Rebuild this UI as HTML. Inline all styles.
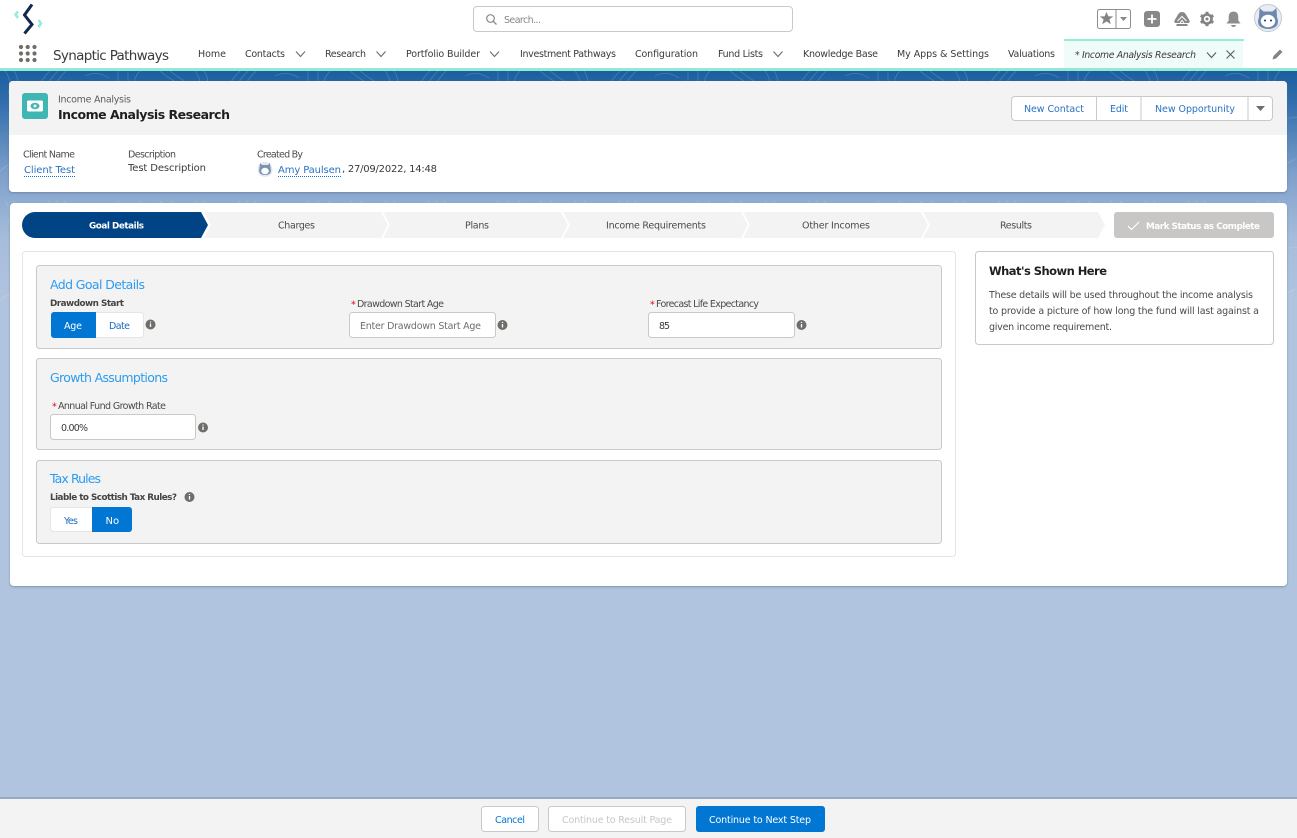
<!DOCTYPE html>
<html><head><meta charset="utf-8"><title>Income Analysis Research</title>
<style>
html,body{margin:0;padding:0;width:1297px;height:838px;overflow:hidden;background:#b0c4df}
svg{position:absolute;left:0;top:0;display:block}
text{font-family:"DejaVu Sans","Liberation Sans",sans-serif;font-size:9.5px;fill:#4a4a48}
.n{fill:#3a3a38}
.b{font-weight:bold}
.h{font-size:12.5px;fill:#2d9cf0}
</style></head><body>
<svg width="1297" height="838" viewBox="0 0 1297 838" xmlns="http://www.w3.org/2000/svg">
<defs>
<linearGradient id="bg" x1="0" y1="0" x2="0" y2="1"><stop offset="0" stop-color="#1b5e9f"/><stop offset=".13" stop-color="#2f6dab"/><stop offset=".45" stop-color="#7fa0cb"/><stop offset=".72" stop-color="#a5bcda"/><stop offset="1" stop-color="#b0c4df"/></linearGradient>
<pattern id="ct" width="190" height="130" patternUnits="userSpaceOnUse" x="0" y="71">
<path d="M5 0q8 10 3 22M14 0q6 8 2 18M50 0q-8 8-12 16M58 0q-8 8-12 16M66 0q-8 8-12 16M85 5q12-6 24 2M118 0v14M128 0v12M140 0q-8 8-6 20M160 0q12 10 22 14M170 0q10 8 18 12M20 60q30-25 60 0t60 10M0 100q25-22 50-4t55 8q25 0 50-16M120 40q20 12 45 4" fill="none" stroke="#fff" stroke-opacity=".16" stroke-width=".9"/>
</pattern>
<filter id="sh" x="-2%" y="-5%" width="104%" height="110%"><feDropShadow dx="0" dy="1" stdDeviation="1" flood-color="#5a6a80" flood-opacity=".55"/></filter>
</defs>
<rect width="1297" height="838" fill="#b0c4df"/>
<rect y="71" width="1297" height="230" fill="url(#bg)"/>
<rect y="71" width="1297" height="230" fill="url(#ct)"/>
<rect width="1297" height="68" fill="#fff"/>
<rect y="68" width="1297" height="3" fill="#94e8d2"/>

<!-- logo -->
<path d="M32 4.500 L24.500 15 L32 24.500 L24.500 33.500" fill="none" stroke="#14284b" stroke-width="3"/>
<path d="M18 11.500 L15.500 14.500 L18 18" fill="none" stroke="#94edd6" stroke-width="2.600"/>
<path d="M38.500 20 L41 23.500 L38.500 27" fill="none" stroke="#94edd6" stroke-width="2.600"/>
<!-- waffle -->
<g fill="#706e6b"><circle cx="21" cy="47" r="2.100"/><circle cx="27.700" cy="47" r="2.100"/><circle cx="34.500" cy="47" r="2.100"/><circle cx="21" cy="53.500" r="2.100"/><circle cx="27.700" cy="53.500" r="2.100"/><circle cx="34.500" cy="53.500" r="2.100"/><circle cx="21" cy="60" r="2.100"/><circle cx="27.700" cy="60" r="2.100"/><circle cx="34.500" cy="60" r="2.100"/></g>
<text x="53" y="60" textLength="116" style="font-size:13.500px" class="n">Synaptic Pathways</text>

<!-- search -->
<rect x="473.500" y="6.500" width="319" height="25" rx="3.500" fill="#fff" stroke="#c9c9c9"/>
<circle cx="490.500" cy="18.500" r="3.800" fill="none" stroke="#8a8886" stroke-width="1.200"/><path d="M493.300 21.300 L496.500 24.500" stroke="#8a8886" stroke-width="1.300"/>
<text x="504" y="23" textLength="37" style="fill:#8a8886">Search...</text>

<!-- top right icons -->
<rect x="1097.500" y="9.500" width="33" height="19" rx="2" fill="#fff" stroke="#8f8d8b"/><path d="M1116 9.500V28.500" stroke="#8f8d8b"/>
<path d="M1106.500 12l1.900 4.400h4.800l-3.800 3 1.400 4.800-4.300-2.800-4.300 2.800 1.400-4.800-3.800-3h4.800z" fill="#858381"/>
<path d="M1120 17h7l-3.500 4z" fill="#8a8886"/>
<rect x="1144" y="11" width="16" height="16" rx="3" fill="#8a8886"/><path d="M1152 14.500v9M1147.500 19h9" stroke="#fff" stroke-width="1.800"/>
<path d="M1182 12q3 0 4.700 3.700l2.800 4.800q.8 2-1 2.500h-13q-1.800-.5-1-2.500l2.800-4.800q1.700-3.700 4.700-3.700z" fill="#8a8886"/><path d="M1177.500 21l4.500-4.500 4.500 4.500M1180 23l2-2.700 2 2.700" fill="none" stroke="#fff" stroke-width="1"/><rect x="1176.500" y="24" width="11" height="2" fill="#8a8886"/>
<g fill="#858381"><circle cx="1207" cy="19" r="5.800"/><rect x="1205.500" y="11.800" width="3" height="14.400"/><rect x="1205.500" y="11.800" width="3" height="14.400" transform="rotate(60 1207 19)"/><rect x="1205.500" y="11.800" width="3" height="14.400" transform="rotate(120 1207 19)"/></g><circle cx="1207" cy="19" r="3.200" fill="#fff"/><circle cx="1207" cy="19" r="1.500" fill="#858381"/>
<path d="M1233.500 11.500q4.500 0 4.800 5v4l2.200 3h-14l2.200-3v-4q.3-5 4.800-5z" fill="#8f8d8b"/><path d="M1231 25h5q-.5 2-2.500 2t-2.500-2z" fill="#8f8d8b"/>
<circle cx="1268" cy="18" r="13.500" fill="#e9edf3" stroke="#c3c9d2"/><path d="M1259.500 8l4 3.500h9l4-3.500 .5 9q2 5 0 8.500-3 3.500-9 3.500t-9-3.500q-2-3.500 0-8.500z" fill="#6f89ae"/><ellipse cx="1268" cy="21" rx="7.200" ry="6.200" fill="#fff"/><circle cx="1265" cy="20.500" r="1" fill="#16325c"/><circle cx="1271" cy="20.500" r="1" fill="#16325c"/>

<!-- nav -->
<text class="n" x="198" y="57" textLength="28">Home</text>
<text class="n" x="245" y="57" textLength="40">Contacts</text>
<text class="n" x="325" y="57" textLength="41">Research</text>
<text class="n" x="406" y="57" textLength="74">Portfolio Builder</text>
<text class="n" x="520" y="57" textLength="96">Investment Pathways</text>
<text class="n" x="635" y="57" textLength="63">Configuration</text>
<text class="n" x="718" y="57" textLength="45">Fund Lists</text>
<text class="n" x="803" y="57" textLength="75">Knowledge Base</text>
<text class="n" x="897" y="57" textLength="92">My Apps &amp; Settings</text>
<text class="n" x="1008" y="57" textLength="47">Valuations</text>
<path d="M296 51.500l4.500 5 4.500-5M376.500 51.500l4.500 5 4.500-5M490 51.500l4.500 5 4.500-5M773.500 51.500l4.500 5 4.500-5" fill="none" stroke="#706e6b" stroke-width="1.100"/>
<rect x="1064" y="39" width="179" height="29" fill="#f0fcf9"/><rect x="1064" y="39" width="180" height="2" fill="#94edd6"/>
<text x="1075" y="58" textLength="121" style="font-style:italic;font-size:9.300px" class="n">* Income Analysis Research</text>
<path d="M1207 52.500l4.500 5 4.500-5M1226.500 50.500l8 8M1234.500 50.500l-8 8" fill="none" stroke="#5c5c5c" stroke-width="1.100"/>
<path d="M1272.500 59.500l1-3.500 6.500-6.500 2.500 2.500-6.500 6.500z" fill="#858381"/>

<!-- header card -->
<rect x="9" y="81" width="1278" height="111" rx="4" fill="#fff" filter="url(#sh)"/>
<path d="M9 135V85a4 4 0 0 1 4-4H1283a4 4 0 0 1 4 4V135z" fill="#f3f3f3"/>
<rect x="22" y="93" width="26" height="26" rx="3" fill="#3fb6b2"/>
<rect x="27" y="100.500" width="16" height="11" rx="1.500" fill="#fff"/><ellipse cx="35" cy="106" rx="4.500" ry="3.200" fill="#3fb6b2"/><circle cx="35" cy="106" r="1.500" fill="#fff"/>
<text x="58" y="102.500" textLength="73" style="fill:#5c5c5a">Income Analysis</text>
<text x="58" y="119" textLength="172" class="b" style="font-size:12.500px;fill:#1f1f1d">Income Analysis Research</text>

<rect x="1011.500" y="96.500" width="261" height="24" rx="3.500" fill="#fff" stroke="#c9c9c9"/>
<path d="M1096.500 96.500v24M1141 96.500v24M1248 96.500v24" stroke="#c9c9c9"/>
<text x="1024" y="112" textLength="60" style="fill:#2a73c5">New Contact</text>
<text x="1110" y="112" textLength="18" style="fill:#2a73c5">Edit</text>
<text x="1155" y="112" textLength="80" style="fill:#2a73c5">New Opportunity</text>
<path d="M1256 106h9l-4.500 5z" fill="#706e6b"/>

<text x="23" y="157.500" textLength="52">Client Name</text>
<text x="128" y="157.500" textLength="48">Description</text>
<text x="257" y="157.500" textLength="46">Created By</text>
<text x="24" y="173" textLength="51" style="font-size:10px;fill:#2a73c5">Client Test</text>
<path d="M24 176.500H75" stroke="#1b6bc0" stroke-dasharray="1 1"/>
<text x="128" y="171" textLength="78" style="font-size:10px" class="n">Test Description</text>
<circle cx="265" cy="169.500" r="7.500" fill="#e3e7ee"/><path d="M260 163l2 2h6l2-2 .5 5q1 3-.5 5.500-2 1.500-5 1.500t-5-1.500q-1.500-2.500-.5-5.500z" fill="#7b92b3"/><ellipse cx="265" cy="171" rx="3.800" ry="3.200" fill="#fff"/>
<text x="278" y="173" textLength="63" style="font-size:10px;fill:#2a73c5">Amy Paulsen</text>
<path d="M278 176.500H341" stroke="#1b6bc0" stroke-dasharray="1 1"/>
<text x="342" y="172" textLength="95" style="font-size:10px" class="n">, 27/09/2022, 14:48</text>

<!-- main card -->
<rect x="10" y="203" width="1277" height="383" rx="4" fill="#fff" filter="url(#sh)"/>

<!-- path -->
<path d="M35 212H201L208 225L201 238H35a13 13 0 0 1 0-26z" fill="#014486"/>
<g fill="#f3f3f3">
<path d="M204 212H381L388 225L381 238H204L211 225z"/>
<path d="M383 212H561L568 225L561 238H383L390 225z"/>
<path d="M563 212H741L748 225L741 238H563L570 225z"/>
<path d="M743 212H921L928 225L921 238H743L750 225z"/>
<path d="M923 212H1098L1105 225L1098 238H923L930 225z"/>
</g>
<text x="89" y="228.500" textLength="55" class="b" style="fill:#fff;font-size:8.800px">Goal Details</text>
<text x="278" y="228.500" textLength="37">Charges</text>
<text x="465" y="228.500" textLength="24">Plans</text>
<text x="606" y="228.500" textLength="100">Income Requirements</text>
<text x="802" y="228.500" textLength="68">Other Incomes</text>
<text x="1000" y="228.500" textLength="32">Results</text>
<rect x="1114" y="212" width="160" height="26" rx="3" fill="#c9c7c5"/>
<path d="M1128 226l3.500 3.500 7.500-7.500" fill="none" stroke="#fff" stroke-width="1.200"/>
<text x="1146" y="229" textLength="114" class="b" style="fill:#fff;font-size:8.800px">Mark Status as Complete</text>

<!-- left box -->
<rect x="22.500" y="251.500" width="933" height="305" rx="3" fill="#fff" stroke="#e5e5e5"/>
<g fill="#f3f3f3" stroke="#c9c9c9">
<rect x="36.500" y="265.500" width="905" height="83" rx="3"/>
<rect x="36.500" y="358.500" width="905" height="91" rx="3"/>
<rect x="36.500" y="460.500" width="905" height="83" rx="3"/>
</g>
<text class="h" x="50" y="289" textLength="95">Add Goal Details</text>
<text class="h" x="50" y="382" textLength="118">Growth Assumptions</text>
<text class="h" x="50" y="483" textLength="51">Tax Rules</text>

<text x="50" y="306" textLength="74" class="b" style="font-size:8.800px;fill:#444">Drawdown Start</text>
<rect x="51.500" y="312.500" width="92" height="25" rx="3" fill="#fff" stroke="#e5e5e5"/>
<path d="M54 312H96V338H54a3 3 0 0 1-3-3V315a3 3 0 0 1 3-3z" fill="#0176d3"/>
<text x="64" y="329" textLength="18" style="fill:#fff">Age</text>
<text x="109" y="329" textLength="21" style="fill:#1b6bc0">Date</text>

<text x="351" y="307.500" style="fill:#ea001e">*</text>
<text x="357" y="307" textLength="87">Drawdown Start Age</text>
<rect x="349.500" y="312.500" width="146" height="25" rx="3" fill="#fff" stroke="#c9c9c9"/>
<text x="360" y="329" textLength="121" style="fill:#706e6b">Enter Drawdown Start Age</text>

<text x="650" y="307.500" style="fill:#ea001e">*</text>
<text x="656" y="307" textLength="103">Forecast Life Expectancy</text>
<rect x="648.500" y="312.500" width="146" height="25" rx="3" fill="#fff" stroke="#c9c9c9"/>
<text x="659" y="329" textLength="11" class="n">85</text>

<text x="52" y="409.500" style="fill:#ea001e">*</text>
<text x="58" y="409" textLength="108">Annual Fund Growth Rate</text>
<rect x="50.500" y="414.500" width="145" height="25" rx="3" fill="#fff" stroke="#c9c9c9"/>
<text x="61" y="431" textLength="27" class="n">0.00%</text>

<text x="50" y="500" textLength="127" class="b" style="font-size:8.800px;fill:#444">Liable to Scottish Tax Rules?</text>
<rect x="50.500" y="507.500" width="81" height="24" rx="3" fill="#fff" stroke="#e5e5e5"/>
<path d="M92 507H129a3 3 0 0 1 3 3V529a3 3 0 0 1-3 3H92z" fill="#0176d3"/>
<text x="64" y="524" textLength="14" style="fill:#1b6bc0">Yes</text>
<text x="105.500" y="524" style="fill:#fff;font-size:10px">No</text>

<!-- info icons -->
<g fill="#706e6b"><circle cx="150.500" cy="324.500" r="5"/><circle cx="502.500" cy="325" r="5"/><circle cx="801.500" cy="325" r="5"/><circle cx="203" cy="427.500" r="5"/><circle cx="189.500" cy="497" r="5"/></g>
<g stroke="#fff" stroke-width="1.300"><path d="M150.500 323.500v3.500M150.500 321.500v1M502.500 324v3.500M502.500 322v1M801.500 324v3.500M801.500 322v1M203 426.500v3.500M203 424.500v1M189.500 496v3.500M189.500 494v1"/></g>

<!-- right box -->
<rect x="975.500" y="251.500" width="298" height="93" rx="3" fill="#fff" stroke="#c9c9c9"/>
<text x="989" y="275" textLength="118" class="b" style="font-size:11.500px;fill:#1f1f1d">What's Shown Here</text>
<text x="989" y="298" textLength="264">These details will be used throughout the income analysis</text>
<text x="989" y="314" textLength="270">to provide a picture of how long the fund will last against a</text>
<text x="989" y="330" textLength="123">given income requirement.</text>

<!-- footer -->
<rect y="797" width="1297" height="41" fill="#f3f3f3"/>
<rect y="797" width="1297" height="2" fill="#98a8c2"/>
<rect x="481.500" y="806.500" width="57" height="25" rx="3" fill="#fff" stroke="#c9c9c9"/>
<text x="495" y="823" textLength="30" style="fill:#0176d3">Cancel</text>
<rect x="548.500" y="806.500" width="137" height="25" rx="3" fill="#fff" stroke="#c9c9c9"/>
<text x="562" y="823" textLength="110" style="fill:#c9c7c5">Continue to Result Page</text>
<rect x="696" y="806" width="129" height="26" rx="3" fill="#0176d3"/>
<text x="709" y="823" textLength="102" style="fill:#fff">Continue to Next Step</text>
</svg>
</body></html>
